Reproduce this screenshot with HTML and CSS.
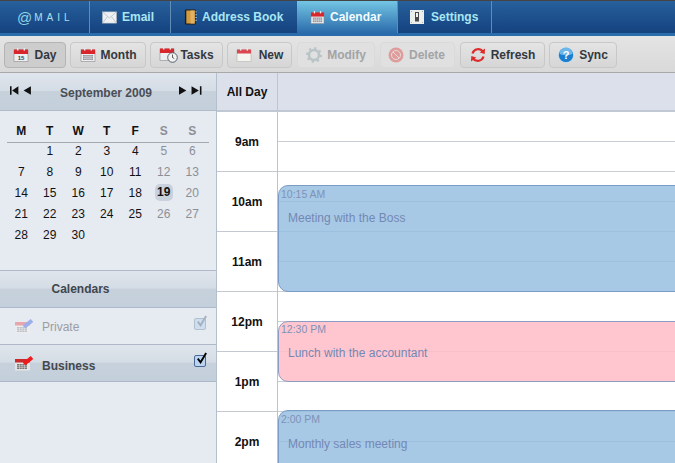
FILE: index.html
```html
<!DOCTYPE html>
<html lang="en">
<head>
<meta charset="utf-8">
<title>@Mail Calendar</title>
<link rel="stylesheet" href="styles.css">
</head>
<body>
<svg class="defs" width="0" height="0" aria-hidden="true">
  <symbol id="cal" viewBox="0 0 16 14">
    <rect x="1" y="2" width="14" height="11.5" fill="#eceef0" stroke="#8a8a8a" stroke-width=".6"/>
    <rect x="1" y="1.5" width="14" height="4.5" fill="#d8262c"/>
    <rect x="4" y="0" width="1.4" height="2.6" fill="#e8e8e8"/>
    <rect x="10.6" y="0" width="1.4" height="2.6" fill="#e8e8e8"/>
  </symbol>
  <symbol id="grid" viewBox="0 0 16 14">
    <use href="#cal" width="16" height="14"/>
    <rect x="3" y="7" width="10" height="5" fill="#8d8d95"/>
    <path d="M3 8.700h10M3 10.400h10M5 7v5M7 7v5M9 7v5M11 7v5" stroke="#eceef0" stroke-width=".5"/>
  </symbol>
</svg>

<nav class="tabs">
  <div class="logo"><span class="logo-at">@</span><span class="logo-mail">MAIL</span></div>
  <a class="tab tab-email">
    <svg class="ico-tab" viewBox="0 0 16 13"><rect x=".5" y=".5" width="15" height="12" fill="#eef1f3" stroke="#aeb6bd" stroke-width=".6"/><path d="M.5.5 8 7l7.500-6.500M.5 12.500l5.500-7M15.500 12.500 10 5.500" fill="none" stroke="#b4bcc4" stroke-width=".8"/></svg>
    Email
  </a>
  <a class="tab tab-book">
    <svg class="ico-tab ico-book" viewBox="0 0 14 16"><rect x="1" y="0" width="11.500" height="16" rx="1" fill="#1f1a14"/><rect x="2.500" y="1" width="9" height="14" fill="#d49a3e"/><rect x="7" y="1" width="4.500" height="14" fill="#e2b264"/><path d="M13 2v1M13 5v1M13 8v1M13 11v1" stroke="#e8eef2" stroke-width="1.200"/></svg>
    Address Book
  </a>
  <a class="tab tab-active">
    <svg class="ico-tab" viewBox="0 0 16 14"><use href="#grid" width="16" height="14"/></svg>
    Calendar
  </a>
  <a class="tab tab-settings">
    <svg class="ico-tab ico-set" viewBox="0 0 14 14"><rect width="14" height="14" fill="#eceeee"/><rect x="5" y="2" width="4" height="9.500" fill="#4a4a4a"/><rect x="6" y="3" width="2" height="4" fill="#f2f2f2"/><circle cx="1.500" cy="1.500" r=".5" fill="#999"/><circle cx="12.500" cy="1.500" r=".5" fill="#999"/><circle cx="1.500" cy="12.500" r=".5" fill="#999"/><circle cx="12.500" cy="12.500" r=".5" fill="#999"/></svg>
    Settings
  </a>
</nav>

<div class="toolbar">
  <button class="btn btn-on btn-day"><svg class="ico-btn" viewBox="0 0 16 14"><use href="#cal" width="16" height="14"/><text x="8" y="12" class="ico-num">15</text></svg>Day</button>
  <button class="btn btn-month"><svg class="ico-btn" viewBox="0 0 16 14"><use href="#grid" width="16" height="14"/></svg>Month</button>
  <button class="btn btn-tasks"><svg class="ico-btn ico-wide" viewBox="0 0 19 16"><use href="#cal" width="16" height="14"/><circle cx="13.500" cy="10.500" r="4.800" fill="#f2f2f2" stroke="#55606c" stroke-width="1"/><path d="M13.500 7.500v3l1.800 1" fill="none" stroke="#333" stroke-width=".8"/></svg>Tasks</button>
  <button class="btn btn-new"><svg class="ico-btn" viewBox="0 0 16 14"><rect x="1" y="2" width="14" height="11.500" fill="#f6f4ee" stroke="#a8a8a8" stroke-width=".5"/><rect x="1" y="1.500" width="14" height="4" fill="#d8484e"/><rect x="4" y="0" width="1.400" height="2.600" fill="#e8e8e8"/><rect x="10.600" y="0" width="1.400" height="2.600" fill="#e8e8e8"/></svg>New</button>
  <button class="btn btn-off btn-modify"><svg class="ico-btn" viewBox="0 0 16 16"><circle cx="8" cy="8" r="5" fill="none" stroke="#8ea3ab" stroke-width="2.600"/><circle cx="8" cy="8" r="7" fill="none" stroke="#8ea3ab" stroke-width="2" stroke-dasharray="2.200 3.300"/></svg>Modify</button>
  <button class="btn btn-off btn-delete"><svg class="ico-btn" viewBox="0 0 16 16"><circle cx="8" cy="8" r="7.500" fill="#dc4a4a"/><circle cx="8" cy="8" r="4.500" fill="none" stroke="#f4d0d0" stroke-width="1"/><path d="m5 5 6 6" stroke="#f4d0d0" stroke-width="1"/></svg>Delete</button>
  <button class="btn btn-refresh"><svg class="ico-btn" viewBox="0 0 16 16"><path d="M2.500 6.500A6 6 0 0 1 13 4.500" fill="none" stroke="#dd2a2a" stroke-width="2.200"/><path d="m15 1.500-.3 5.500-5-1.500z" fill="#dd2a2a"/><path d="M13.500 9.500A6 6 0 0 1 3 11.500" fill="none" stroke="#dd2a2a" stroke-width="2.200"/><path d="m1 14.500.3-5.500 5 1.500z" fill="#dd2a2a"/></svg>Refresh</button>
  <button class="btn btn-sync"><svg class="ico-btn" viewBox="0 0 16 16"><circle cx="8" cy="8" r="7.600" fill="#1a7fd0" stroke="#e8eef2" stroke-width=".6"/><path d="M1.500 7a6.500 6.500 0 0 1 13 0q-6.500 2.500-13 0z" fill="#6db6ea"/><text x="8" y="12" class="ico-q">?</text></svg>Sync</button>
</div>

<main class="main">
  <aside class="sidebar">
    <div class="month-head band">
      <span class="nav">
        <svg class="arrows" viewBox="0 0 22 8"><path d="M0 0h1.500v8H0zM8 0v8L2 4zM20 0v8l-7-4z"/></svg>
      </span>
      <span class="month-title">September 2009</span>
      <span class="nav">
        <svg class="arrows" viewBox="0 0 22 8"><path d="M0 0v8l7-4zM12 0v8l7-4zM20 0h1.500v8H20z"/></svg>
      </span>
    </div>
    <div class="cal-wrap">
      <div class="cal-week cal-heads">
        <b>M</b><b>T</b><b>W</b><b>T</b><b>F</b><b class="we">S</b><b class="we">S</b>
      </div>
      <div class="cal-week cal-days">
        <span></span><span>1</span><span>2</span><span>3</span><span>4</span><span class="we">5</span><span class="we">6</span>
        <span>7</span><span>8</span><span>9</span><span>10</span><span>11</span><span class="we">12</span><span class="we">13</span>
        <span>14</span><span>15</span><span>16</span><span>17</span><span>18</span><span class="today">19</span><span class="we">20</span>
        <span>21</span><span>22</span><span>23</span><span>24</span><span>25</span><span class="we">26</span><span class="we">27</span>
        <span>28</span><span>29</span><span>30</span>
      </div>
    </div>
    <div class="cal-title band">Calendars</div>
    <div class="cal-item cal-private">
      <svg class="ico-item" viewBox="0 0 20 16"><rect x="0" y="4" width="15" height="11.500" fill="#eee"/><rect x="0" y="4" width="15" height="3.500" fill="#e88a90"/><rect x="2" y="9" width="10" height="5" fill="#b0b0b8"/><path d="M2 10.700h10M2 12.400h10M4.500 9v5M7 9v5M9.500 9v5" stroke="#eee" stroke-width=".5"/><path d="m9 9 8-6.500" stroke="#7d97e8" stroke-width="4"/></svg>
      <span class="item-name">Private</span>
      <span class="check check-dim"><svg viewBox="0 0 14 14"><path d="m3 6 3 4L12 0" fill="none" stroke="#6f8296" stroke-width="2"/></svg></span>
    </div>
    <div class="cal-item cal-business band">
      <svg class="ico-item" viewBox="0 0 20 16"><rect x="0" y="4" width="15" height="11.500" fill="#e4e4e4"/><rect x="0" y="4" width="15" height="3.500" fill="#cc2a2a"/><rect x="2" y="9" width="10" height="5" fill="#777"/><path d="M2 10.700h10M2 12.400h10M4.500 9v5M7 9v5M9.500 9v5" stroke="#e4e4e4" stroke-width=".5"/><path d="m9 9 8-6.500" stroke="#ee1c1c" stroke-width="4"/></svg>
      <span class="item-name item-bold">Business</span>
      <span class="check"><svg viewBox="0 0 14 14"><path d="m3 6 3 4L12 0" fill="none" stroke="#000" stroke-width="2"/></svg></span>
    </div>
  </aside>

  <section class="day">
    <div class="allday">
      <div class="allday-label">All Day</div>
      <div class="allday-cell"></div>
    </div>
    <div class="schedule">
      <div class="times">
        <div class="time">9am</div>
        <div class="time">10am</div>
        <div class="time">11am</div>
        <div class="time">12pm</div>
        <div class="time">1pm</div>
        <div class="time">2pm</div>
      </div>
      <div class="slots">
        <div class="slot"></div><div class="slot"></div>
        <div class="slot"></div><div class="slot"></div>
        <div class="slot"></div><div class="slot"></div>
        <div class="slot"></div><div class="slot"></div>
        <div class="slot"></div><div class="slot"></div>
        <div class="slot"></div><div class="slot"></div>
        <div class="event event-blue ev-boss"><div class="ev-time">10:15 AM</div><div class="ev-title">Meeting with the Boss</div></div>
        <div class="event event-pink ev-lunch"><div class="ev-time">12:30 PM</div><div class="ev-title">Lunch with the accountant</div></div>
        <div class="event event-blue ev-sales"><div class="ev-time">2:00 PM</div><div class="ev-title">Monthly sales meeting</div></div>
      </div>
    </div>
  </section>
</main>
</body>
</html>
```

FILE: styles.css
```css
* { box-sizing: border-box; }
html, body { margin: 0; padding: 0; }
body {
  width: 675px;
  height: 463px;
  overflow: hidden;
  font-family: "Liberation Sans", Arial, sans-serif;
  background: #fff;
  display: flex;
  flex-direction: column;
}
.defs { position: absolute; }

/* top tabs */
.tabs {
  height: 36px;
  flex: none;
  display: flex;
  border-top: 1px solid #444;
  border-bottom: 3px solid #2a6bab;
  background: linear-gradient(#27609c, #14427f);
}
.logo {
  width: 90px;
  padding-left: 17px;
  display: flex;
  align-items: center;
  border-right: 1px solid #5f8db5;
  color: #8ed3e6;
}
.logo-at { font-size: 15px; line-height: 1; margin-right: 2px; }
.logo-mail { font-size: 10px; letter-spacing: 4px; color: #a9e0ee; }
.tab {
  display: flex;
  align-items: center;
  gap: 5px;
  font-size: 12px;
  font-weight: bold;
  color: #a9e6f4;
  border-right: 1px solid #5f8db5;
}
.tab-email { width: 81px; padding-left: 12px; }
.tab-book { width: 126px; padding-left: 13px; border-right: 0; }
.tab-active {
  width: 101px;
  padding-left: 13px;
  color: #f2fbfe;
  background: linear-gradient(#73c5e4, #2a6bab);
}
.tab-settings { width: 94px; padding-left: 12px; }
.ico-tab { width: 15px; height: 13px; flex: none; }
.ico-book { width: 13px; height: 16px; }
.ico-set { width: 14px; height: 14px; margin-right: 2px; }

/* toolbar */
.toolbar {
  height: 37px;
  flex: none;
  display: flex;
  align-items: flex-start;
  gap: 4px;
  padding: 6px 0 0 4px;
  background: linear-gradient(#e4e4e4, #d9d9d9);
  border-bottom: 1px solid #a9a9a9;
}
.btn {
  height: 26px;
  padding: 0;
  display: flex;
  align-items: center;
  justify-content: center;
  gap: 5px;
  font: bold 12px "Liberation Sans", Arial, sans-serif;
  color: #33383f;
  background: linear-gradient(#e4e4e4, #d6d6d6);
  border: 1px solid #c8c8c8;
  border-radius: 4px;
}
.btn-on { background: #cdcdcd; border-color: #b4b4b4; }
.btn-off { color: #a2a4a6; border-color: #dadada; background: #e0e0e0; }
.btn-off .ico-btn { opacity: .45; }
.btn-day { width: 62px; }
.btn-month { width: 76px; }
.btn-tasks { width: 73px; gap: 2px; }
.btn-new { width: 65px; gap: 7px; }
.btn-modify { width: 78px; margin-left: 1px; }
.btn-delete { width: 75px; margin-left: 1px; padding-right: 2px; }
.btn-refresh { width: 85px; margin-left: 1px; }
.btn-sync { width: 68px; }
.ico-btn { width: 16px; height: 16px; flex: none; }
.ico-wide { width: 19px; }
.ico-num { font: bold 6px "Liberation Sans", sans-serif; fill: #444; text-anchor: middle; }
.ico-q { font: bold 11px "Liberation Sans", sans-serif; fill: #fff; text-anchor: middle; }

/* main layout */
.main { flex: 1; display: flex; min-height: 0; }
.sidebar {
  width: 217px;
  flex: none;
  background: #e6eaf1;
  border-right: 1px solid #b4bfce;
  display: flex;
  flex-direction: column;
}
.band {
  background: linear-gradient(#e0e5ed 0, #d4dce5 48%, #c6d1dc 50%, #c3cfda 100%);
}
.month-head {
  height: 38px;
  flex: none;
  display: flex;
  align-items: center;
  justify-content: space-between;
  padding: 0 14px 0 10px;
  border-bottom: 1px solid #b1bbc8;
}
.arrows { width: 23px; height: 9px; display: block; fill: #111; margin-top: -2px; }
.month-title { font-size: 12px; font-weight: bold; color: #4a4e55; padding-top: 2px; }
.cal-wrap { height: 159px; flex: none; padding: 10px 7px 0 7px; }
.cal-week {
  display: grid;
  grid-template-columns: repeat(7, 28.500px);
  text-align: center;
  font-size: 12px;
  color: #111;
}
.cal-heads { height: 22px; align-items: center; border-bottom: 1px solid #a4a9af; padding-bottom: 2px; width: 202px; }
.cal-days { grid-auto-rows: 21px; align-items: center; margin-top: -3px; }
.we { color: #8c9096; }
.today {
  font-weight: bold;
  justify-self: center;
  width: 18px;
  height: 17px;
  line-height: 17px;
  background: #c9d2dc;
  border-radius: 5px;
}
.cal-title {
  height: 38px;
  flex: none;
  padding-right: 55px;
  display: flex;
  align-items: center;
  justify-content: center;
  font-size: 12px;
  font-weight: bold;
  color: #42464c;
  border-top: 1px solid #aeb8c8;
  border-bottom: 1px solid #aeb8c8;
}
.cal-item {
  height: 37px;
  flex: none;
  display: flex;
  align-items: center;
  padding: 0 10px 0 15px;
  font-size: 12px;
  border-bottom: 1px solid #aeb8c8;
}
.ico-item { width: 20px; height: 16px; flex: none; margin-right: 7px; }
.cal-private .ico-item { opacity: .7; }
.item-name { flex: 1; padding-top: 1px; color: #9a9ea4; }
.item-bold { color: #44484e; font-weight: bold; padding-top: 6px; }
.check {
  width: 12px;
  height: 12px;
  margin-top: -4px;
  background: #bcd4f0;
  border: 1px solid #4a6a94;
  border-radius: 2px;
}
.check svg { display: block; width: 13px; height: 13px; margin-top: -3px; overflow: visible; }
.check-dim { opacity: .55; border-color: #8aa0b4; }

/* day view */
.day { flex: 1; min-width: 0; display: flex; flex-direction: column; }
.allday {
  height: 39px;
  flex: none;
  display: flex;
  background: #dbe0ea;
  border-bottom: 2px solid #bfc8d3;
}
.allday-label {
  width: 61px;
  flex: none;
  border-right: 1px solid #bcc5d0;
  display: flex;
  align-items: center;
  justify-content: center;
  font-size: 12px;
  font-weight: bold;
  color: #111;
}
.allday-cell { flex: 1; }
.schedule { flex: 1; display: flex; min-height: 0; overflow: hidden; }
.times { width: 61px; flex: none; border-right: 1px solid #bcc3cb; }
.time {
  height: 60px;
  flex: none;
  display: flex;
  align-items: center;
  justify-content: center;
  font-size: 12px;
  font-weight: bold;
  color: #111;
  border-bottom: 1px solid #c3c9d0;
}
.slots { flex: 1; position: relative; }
.slot { height: 30px; border-bottom: 1px solid #c9ced4; }
.event {
  position: absolute;
  left: 0;
  right: -12px;
  border: 1px solid #7a9cc6;
  border-radius: 10px;
  color: #7488b4;
}
.event-blue { background: rgba(148, 189, 225, .82); }
.event-pink { background: rgba(255, 190, 200, .88); border-color: #8d9cc4; }
.ev-boss { top: 73px; height: 107px; }
.ev-lunch { top: 209px; height: 61px; }
.ev-sales { top: 298px; height: 80px; }
.ev-time { font-size: 10.500px; padding: 2px 0 0 2px; line-height: 13px; color: #7f92b6; }
.ev-lunch .ev-time { padding-top: 1px; }
.ev-title { font-size: 12px; padding: 10px 0 0 9px; line-height: 14px; }
.ev-sales .ev-title { padding-top: 11px; }
```
